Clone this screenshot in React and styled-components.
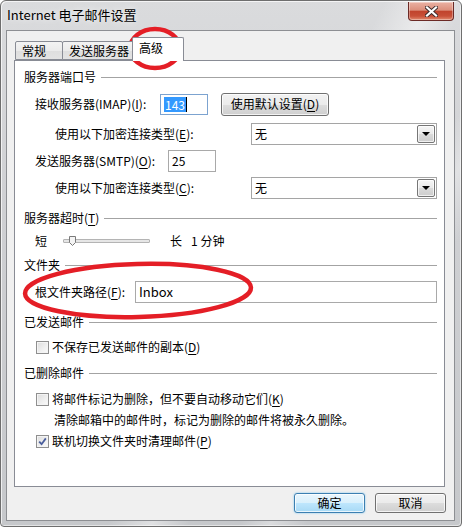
import styled, { createGlobalStyle } from 'styled-components';

const GlobalStyle = createGlobalStyle`
  html, body {
    margin: 0;
    padding: 0;
    background: #fff;
  }
  body {
    font-family: "Noto Sans CJK SC", "Microsoft YaHei", sans-serif;
    font-size: 12px;
    color: #000;
  }
  u {
    text-decoration-thickness: 1px;
    text-underline-offset: 2px;
  }
`;

const Window = styled.div`
  position: relative;
  box-sizing: border-box;
  width: 462px;
  height: 527px;
  display: flex;
  flex-direction: column;
  padding: 0 6px 5px 5px;
  border: 1px solid #6e6e6e;
  border-radius: 6px 6px 4px 4px;
  background:
    linear-gradient(118deg, rgba(255,255,255,0) 52%, rgba(255,255,255,.45) 58%, rgba(255,255,255,0) 63%, rgba(255,255,255,0) 70%, rgba(255,255,255,.35) 74%, rgba(255,255,255,0) 79%),
    linear-gradient(180deg, #dadbdd 0%, #cfd0d3 40%, #c6c8cb 100%);
  box-shadow: inset 1px 1px 0 rgba(255,255,255,.7), inset -1px -1px 0 rgba(255,255,255,.5);
`;

const TitleBar = styled.div`
  height: 29px;
  display: flex;
  align-items: flex-start;
`;

const Title = styled.div`
  margin: 5px 0 0 1px;
  font-size: 13px;
  line-height: 18px;
  color: #000;
  text-shadow: 0 0 6px rgba(255,255,255,.9);
`;

const CloseButton = styled.div`
  margin: 1px 1px 0 auto;
  width: 44px;
  height: 18px;
  display: flex;
  align-items: center;
  justify-content: center;
  border: 1px solid #6b2a26;
  border-top: none;
  border-radius: 0 0 4px 4px;
  background: linear-gradient(180deg, #eab1a3 0%, #dc8f7c 45%, #c1442d 52%, #c84f37 78%, #e18b70 100%);
  box-shadow: inset 0 0 0 1px rgba(255,255,255,.35);
`;

const Client = styled.div`
  flex: 1;
  display: flex;
  flex-direction: column;
  background: #f0f0f0;
  border: 1px solid #8d8f93;
`;

const TabRow = styled.div`
  height: 29px;
  display: flex;
  align-items: flex-end;
  padding-left: 8px;
`;

const Tab = styled.div`
  box-sizing: border-box;
  position: relative;
  width: ${p => p.$w}px;
  height: ${p => (p.$active ? 24 : 19)}px;
  margin-left: ${p => p.$ml || 0}px;
  margin-bottom: ${p => (p.$active ? -1 : 0)}px;
  padding-left: 6px;
  display: flex;
  align-items: center;
  border: 1px solid #898c95;
  border-bottom: ${p => (p.$active ? 'none' : '1px solid #898c95')};
  border-radius: 2px 2px 0 0;
  background: ${p => (p.$active ? '#fff' : 'linear-gradient(180deg, #f3f3f3 0%, #ebebeb 50%, #dedede 51%, #e3e3e3 100%)')};
  z-index: ${p => (p.$active ? 2 : 1)};
  line-height: 16px;
  padding-bottom: ${p => (p.$active ? 3 : 0)}px;
`;

const Panel = styled.div`
  box-sizing: border-box;
  height: 427px;
  margin: 0 9px 0 7px;
  padding: 6px 7px 0 9px;
  display: flex;
  flex-direction: column;
  background: #fff;
  border: 1px solid #898c95;
`;

const Row = styled.div`
  display: flex;
  align-items: center;
  flex-shrink: 0;
  height: ${p => p.$h || 20}px;
  margin-top: ${p => p.$mt || 0}px;
  padding-left: ${p => p.$indent || 0}px;
  line-height: 16px;
  white-space: nowrap;
`;

const Rule = styled.div`
  flex: 1;
  height: 1px;
  margin-left: 5px;
  background: #a3a3a3;
`;

const Label = styled.span`
  flex-shrink: 0;
  width: ${p => (p.$w ? `${p.$w}px` : 'auto')};
`;

const TextBox = styled.div`
  box-sizing: border-box;
  display: flex;
  align-items: center;
  width: ${p => (p.$w ? `${p.$w}px` : 'auto')};
  flex: ${p => (p.$w ? 'none' : '1')};
  height: ${p => p.$h || 22}px;
  padding-left: 3px;
  border: 1px solid ${p => (p.$focus ? '#7ca3d0' : '#a9a9a9')};
  background: #fff;
  font-size: ${p => p.$fs || 12}px;
`;

const Selected = styled.span`
  background: #3399ff;
  color: #fff;
  padding: 0 1px;
  line-height: 15px;
  border-right: 1px solid #000;
`;

const PushButton = styled.div`
  box-sizing: border-box;
  display: flex;
  align-items: center;
  justify-content: center;
  width: ${p => p.$w}px;
  height: ${p => p.$h || 20}px;
  margin-left: ${p => p.$ml || 0}px;
  border: 1px solid ${p => (p.$default ? '#3c7fb1' : '#707070')};
  border-radius: 3px;
  background: ${p =>
    p.$default
      ? 'linear-gradient(180deg, #eaf6fd 0%, #d9f0fc 50%, #bee6fd 51%, #a7d9f5 100%)'
      : 'linear-gradient(180deg, #f2f2f2 0%, #ebebeb 50%, #dddddd 51%, #cfcfcf 100%)'};
  box-shadow: inset 0 0 0 1px rgba(255,255,255,.75)${p => (p.$default ? ', 0 0 2px #6fc3f0' : '')};
  line-height: 16px;
`;

const Select = styled.div`
  box-sizing: border-box;
  flex: 1;
  height: 22px;
  display: flex;
  align-items: center;
  padding-left: 3px;
  border: 1px solid #a5a5a5;
  background: #fff;
`;

const DropButton = styled.div`
  box-sizing: border-box;
  width: 18px;
  height: 18px;
  margin: 0 1px 0 auto;
  display: flex;
  align-items: center;
  justify-content: center;
  border: 1px solid #767676;
  border-radius: 2px;
  background: linear-gradient(180deg, #f6f6f6 0%, #e9e9e9 50%, #dadada 51%, #cdcdcd 100%);
  box-shadow: inset 0 0 0 1px rgba(255,255,255,.7);
`;

const Arrow = styled.div`
  width: 0;
  height: 0;
  border-left: 4px solid transparent;
  border-right: 4px solid transparent;
  border-top: 4px solid #000;
`;

const Track = styled.div`
  position: relative;
  box-sizing: border-box;
  width: 87px;
  height: 4px;
  margin: 0 20px 0 16px;
  border: 1px solid #b4b4b4;
  border-radius: 1px;
  background: #e6e6e6;
`;

const Thumb = styled.svg`
  position: absolute;
  left: 5px;
  top: -4px;
`;

const Box = styled.div`
  box-sizing: border-box;
  width: 13px;
  height: 13px;
  margin-right: 3px;
  display: flex;
  align-items: center;
  justify-content: center;
  border: 1px solid #8f8f8f;
  background: linear-gradient(135deg, #dcdcdc 0%, #f0f0f0 60%, #fbfbfb 100%);
  box-shadow: inset 0 0 0 1px #f4f4f4;
`;

const ButtonRow = styled.div`
  flex: 1;
  display: flex;
  align-items: center;
  justify-content: flex-end;
  gap: 10px;
  padding: 0 8px 1px 0;
`;

const Annotations = styled.svg`
  position: absolute;
  left: -1px;
  top: -1px;
  pointer-events: none;
`;

const Heading = ({ mt, children }) => (
  <Row $h={20} $mt={mt}>
    <span>{children}</span>
    <Rule />
  </Row>
);

const Check = ({ checked, mt, children }) => (
  <Row $h={20} $mt={mt} $indent={12}>
    <Box>
      {checked ? (
        <svg width="9" height="9" viewBox="0 0 9 9">
          <path d="M1.2 4.6 L3.6 7.2 L7.8 1.4" fill="none" stroke="#4a5e9c" strokeWidth="1.8" />
        </svg>
      ) : null}
    </Box>
    <span>{children}</span>
  </Row>
);

const Combo = ({ value }) => (
  <Select>
    <span>{value}</span>
    <DropButton>
      <Arrow />
    </DropButton>
  </Select>
);

export default function App() {
  return (
    <>
      <GlobalStyle />
      <Window>
        <TitleBar>
          <Title>Internet 电子邮件设置</Title>
          <CloseButton>
            <svg width="13" height="11" viewBox="0 0 13 11">
              <path d="M2 1.5 L11 9.5 M11 1.5 L2 9.5" stroke="#3b2a2a" strokeWidth="4" strokeLinecap="square" />
              <path d="M2 1.5 L11 9.5 M11 1.5 L2 9.5" stroke="#fff" strokeWidth="2.2" strokeLinecap="square" />
            </svg>
          </CloseButton>
        </TitleBar>
        <Client>
          <TabRow>
            <Tab $w={48}>常规</Tab>
            <Tab $w={74} $ml={-1}>发送服务器</Tab>
            <Tab $w={52} $ml={-4} $active>高级</Tab>
          </TabRow>
          <Panel>
            <Heading>服务器端口号</Heading>
            <Row $h={24} $mt={5} $indent={11}>
              <Label $w={125}>接收服务器(IMAP)(<u>I</u>):</Label>
              <TextBox $w={48} $h={21} $focus>
                <Selected>143</Selected>
              </TextBox>
              <PushButton $w={108} $h={23} $ml={13}>使用默认设置(<u>D</u>)</PushButton>
            </Row>
            <Row $h={22} $mt={7} $indent={31}>
              <Label $w={196}>使用以下加密连接类型(<u>E</u>):</Label>
              <Combo value="无" />
            </Row>
            <Row $h={22} $mt={5} $indent={11}>
              <Label $w={133}>发送服务器(SMTP)(<u>O</u>):</Label>
              <TextBox $w={48}>25</TextBox>
            </Row>
            <Row $h={22} $mt={5} $indent={31}>
              <Label $w={196}>使用以下加密连接类型(<u>C</u>):</Label>
              <Combo value="无" />
            </Row>
            <Heading mt={9}>服务器超时(<u>T</u>)</Heading>
            <Row $h={20} $mt={3} $indent={11}>
              <span>短</span>
              <Track>
                <Thumb width="7" height="10" viewBox="0 0 7 10">
                  <path d="M0.5 0.5 H6.5 V6.5 L3.5 9.5 L0.5 6.5 Z" fill="#f4f4f4" stroke="#7a7a7a" />
                </Thumb>
              </Track>
              <span>长</span>
              <span style={{ marginLeft: 9 }}>1 分钟</span>
            </Row>
            <Heading mt={4}>文件夹</Heading>
            <Row $h={22} $mt={6} $indent={11}>
              <Label $w={100}>根文件夹路径(<u>F</u>):</Label>
              <TextBox $fs={13}>Inbox</TextBox>
            </Row>
            <Heading mt={9}>已发送邮件</Heading>
            <Check mt={5}>不保存已发送邮件的副本(<u>D</u>)</Check>
            <Heading mt={6}>已删除邮件</Heading>
            <Check mt={6}>将邮件标记为删除，但不要自动移动它们(<u>K</u>)</Check>
            <Row $h={20} $mt={1} $indent={30}>清除邮箱中的邮件时，标记为删除的邮件将被永久删除。</Row>
            <Check mt={1} checked>联机切换文件夹时清理邮件(<u>P</u>)</Check>
          </Panel>
          <ButtonRow>
            <PushButton $w={71} $default>确定</PushButton>
            <PushButton $w={71}>取消</PushButton>
          </ButtonRow>
        </Client>
        <Annotations width="462" height="527" viewBox="0 0 462 527">
          <ellipse cx="155" cy="48.5" rx="25" ry="19.5" fill="none" stroke="#e41e26" strokeWidth="4.5" />
          <ellipse cx="138" cy="290.5" rx="113" ry="26.5" fill="none" stroke="#e41e26" strokeWidth="4.5" transform="rotate(-1.5 138 290.5)" />
        </Annotations>
      </Window>
    </>
  );
}
